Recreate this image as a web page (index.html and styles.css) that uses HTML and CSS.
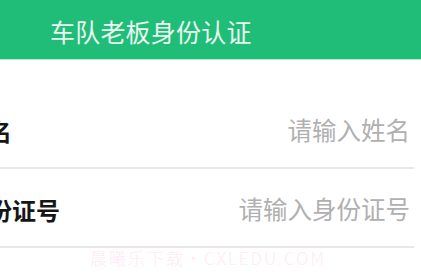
FILE: index.html
```html
<!DOCTYPE html>
<html lang="zh">
<head>
<meta charset="utf-8">
<link rel="stylesheet" href="styles.css">
</head>
<body>
<div class="page">
  <header class="topbar"><span class="title">车队老板身份认证</span></header>
  <div class="form">
    <div class="row">
      <span class="label">姓名</span>
      <span class="placeholder">请输入姓名</span>
    </div>
    <div class="row">
      <span class="label">身份证号</span>
      <span class="placeholder">请输入身份证号</span>
    </div>
  </div>
  <div class="watermark">晨曦乐下载・CXLEDU.COM</div>
</div>
</body>
</html>
```
FILE: styles.css
```css
html, body {
  margin: 0;
  padding: 0;
  background: #ffffff;
}
body {
  font-family: "Noto Sans CJK SC", "Noto Sans", sans-serif;
  overflow: hidden;
}
.page {
  position: relative;
  width: 421px;
  height: 278px;
  overflow: hidden;
}
.topbar {
  height: 60px;
  background: #20bd78;
  border-bottom: 1px solid #b4ecd2;
  display: flex;
  align-items: center;
  padding-left: 50px;
  padding-top: 4px;
  box-sizing: border-box;
}
.title {
  color: #e9f7f0;
  font-size: 25px;
  letter-spacing: 0.2px;
  line-height: 1;
}
.form {
  margin-top: 30px;
  margin-left: -36px;
  margin-right: 7px;
}
.row {
  height: 79px;
  box-sizing: border-box;
  padding-top: 4px;
  padding-right: 4px;
  border-bottom: 2px solid #e8e8e8;
  display: flex;
  align-items: center;
  justify-content: space-between;
}
.label {
  font-size: 24px;
  font-weight: 700;
  color: #161616;
  line-height: 1;
}
.placeholder {
  font-size: 24.5px;
  color: #b0b0b0;
  line-height: 1;
}
.watermark {
  position: absolute;
  left: 90px;
  top: 245px;
  font-size: 17px;
  letter-spacing: 2px;
  font-weight: 300;
  color: #fdebf6;
  font-family: "Noto Sans CJK SC", "Noto Sans", sans-serif;
  white-space: nowrap;
}
```
